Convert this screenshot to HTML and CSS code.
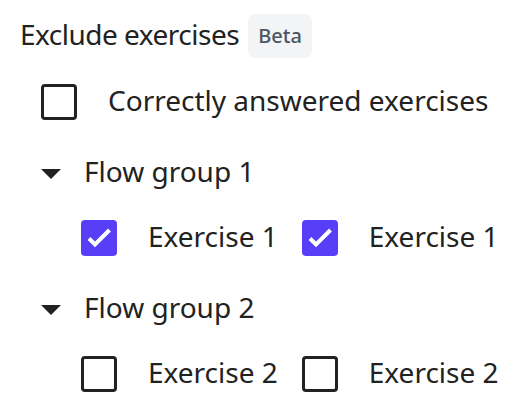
FILE: index.html
```html
<!DOCTYPE html>
<html lang="en">

<head>
    <meta charset="UTF-8">
    <meta name="viewport" content="width=device-width, initial-scale=1.0">
    <link rel="stylesheet" href="styles.css">
    <title>Exclude exercises</title>
</head>

<body>
    <div class="filter">
        <div class="filter-head">
            <span class="filter-title">Exclude exercises</span>
            <span class="badge">Beta</span>
        </div>

        <div class="filter-body">
            <label class="check-row">
                <span class="box"></span>
                <span class="check-text">Correctly answered exercises</span>
            </label>

            <!-- Flow group 1 -->
            <div class="group">
                <div class="group-head">
                    <svg class="caret" width="20" height="10" viewBox="0 0 20 10"><polygon points="0,0 20,0 10,10" /></svg>
                    <span class="group-title">Flow group 1</span>
                </div>
                <div class="group-items">
                    <label class="check-row">
                        <span class="box checked">
                            <svg width="36" height="36" viewBox="0 0 36 36"><path d="M8 18.5l6 6L28.5 10" /></svg>
                        </span>
                        <span class="check-text">Exercise 1</span>
                    </label>
                    <label class="check-row">
                        <span class="box checked">
                            <svg width="36" height="36" viewBox="0 0 36 36"><path d="M8 18.5l6 6L28.5 10" /></svg>
                        </span>
                        <span class="check-text">Exercise 1</span>
                    </label>
                </div>
            </div>

            <!-- Flow group 2 -->
            <div class="group">
                <div class="group-head">
                    <svg class="caret" width="20" height="10" viewBox="0 0 20 10"><polygon points="0,0 20,0 10,10" /></svg>
                    <span class="group-title">Flow group 2</span>
                </div>
                <div class="group-items">
                    <label class="check-row">
                        <span class="box"></span>
                        <span class="check-text">Exercise 2</span>
                    </label>
                    <label class="check-row">
                        <span class="box"></span>
                        <span class="check-text">Exercise 2</span>
                    </label>
                </div>
            </div>
        </div>
    </div>
</body>

</html>
```
FILE: styles.css
```css
/* General */
body {
    font-family: "Noto Sans", "Open Sans", sans-serif;
    background-color: #ffffff;
    color: #222222;
    margin: 0;
}

.filter {
    padding: 14px 20px;
}

.filter-head {
    display: flex;
    align-items: center;
    gap: 9px;
    height: 44px;
}

.filter-title {
    font-size: 28px;
    line-height: 33px;
    letter-spacing: -0.5px;
    margin-bottom: 3px;
    white-space: nowrap;
}

.badge {
    display: inline-block;
    height: 44px;
    padding: 0 10px;
    line-height: 43px;
    font-size: 20px;
    font-weight: 500;
    color: #4b5563;
    background-color: #f3f4f6;
    border-radius: 7px;
}

.filter-body {
    padding-left: 21px;
    margin-top: 26px;
}

/* Checkbox rows */
.check-row {
    display: flex;
    align-items: center;
    gap: 31px;
    height: 36px;
    cursor: pointer;
}

.box {
    flex: none;
    width: 36px;
    height: 36px;
    box-sizing: border-box;
    border: 3px solid #222222;
    border-radius: 4px;
}

.box.checked {
    border: none;
    background-color: #583ef6;
}

.box svg {
    display: block;
}

.box path {
    fill: none;
    stroke: #ffffff;
    stroke-width: 4;
}

.check-text,
.group-title {
    font-size: 28px;
    line-height: 33px;
    margin-bottom: 3px;
    white-space: nowrap;
}

/* Flow groups */
.group {
    margin-top: 35px;
}

.group-head {
    display: flex;
    align-items: center;
    gap: 23px;
    height: 36px;
}

.caret {
    flex: none;
    fill: #222222;
    margin-top: 1px;
}

.group-items {
    display: flex;
    gap: 24px;
    margin-top: 29px;
    padding-left: 40px;
}
```
